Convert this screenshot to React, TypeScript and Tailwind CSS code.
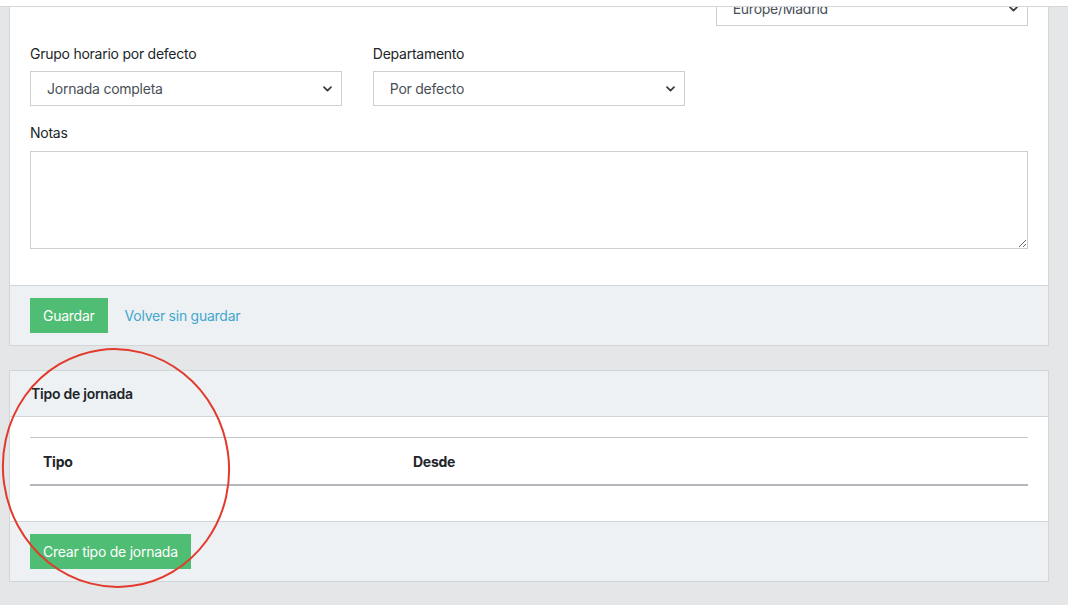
import React from "react";

function Chevron() {
  return (
    <svg width="9" height="6" viewBox="0 0 9 6" className="shrink-0">
      <path d="M1 1.2l3.5 3.4 3.5-3.4" fill="none" stroke="#343a40" strokeWidth="1.7" strokeLinecap="round" strokeLinejoin="round" />
    </svg>
  );
}

function FakeSelect({ value }: { value: string }) {
  return (
    <div className="h-[35px] border border-[#cdd0d3] bg-white flex items-center justify-between pl-4 pr-[9px] text-[14px] text-[#495057]">
      <span>{value}</span>
      <Chevron />
    </div>
  );
}

export default function App() {
  return (
    <div
      className="relative h-[605px] overflow-hidden bg-[#e4e6e8] text-[14px] leading-[21px] tracking-[-0.25px] text-[#212529]"
      style={{ fontFamily: "Inter, 'Noto Sans', sans-serif" }}
    >
      <div className="absolute top-0 left-0 right-0 h-[7px] bg-white border-b border-[#d5d8db] z-10" />

      <div className="pl-[9px] w-[1049px]">
        {/* Card 1 */}
        <div className="mt-[-30px] border border-[#d3d6d9] bg-white">
          <div className="px-5 pt-5 pb-[36px]">
            <div className="grid grid-cols-3 gap-x-[30.5px]">
              <div />
              <div />
              <FakeSelect value="Europe/Madrid" />
            </div>
            <div className="grid grid-cols-3 gap-x-[30.5px] mt-[17px]">
              <div>
                <div className="mb-[7px]">Grupo horario por defecto</div>
                <FakeSelect value="Jornada completa" />
              </div>
              <div>
                <div className="mb-[7px]">Departamento</div>
                <FakeSelect value="Por defecto" />
              </div>
              <div />
            </div>
            <div className="mt-[16px]">
              <div className="mb-[8px]">Notas</div>
              <textarea className="block w-full h-[98px] border border-[#cdd0d3] bg-white outline-none" />
            </div>
          </div>
          <div className="border-t border-[#d3d6d9] bg-[#edf1f4] px-5 py-3 flex items-center gap-[17px]">
            <button className="h-[35px] px-[13px] bg-[#4fbd74] text-white text-[14px]">Guardar</button>
            <span className="text-[#44a6cc]">Volver sin guardar</span>
          </div>
        </div>

        {/* Card 2 */}
        <div className="mt-6 border border-[#d3d6d9] bg-white">
          <div className="bg-[#edf1f4] border-b border-[#d3d6d9] h-[46px] flex items-center pl-[21px] font-semibold">
            Tipo de jornada
          </div>
          <div className="px-5 pt-5 pb-[35px]">
            <div className="border-t border-[#c4c7cb] border-b-2 border-b-[#b4b8bc] h-[49px] flex items-center font-bold">
              <div className="w-[371px] pl-[13px]">Tipo</div>
              <div className="pl-[12px]">Desde</div>
            </div>
          </div>
          <div className="border-t border-[#d3d6d9] bg-[#edf1f4] px-5 py-3 flex items-center">
            <button className="h-[35px] px-[13px] bg-[#4fbd74] text-white text-[14px]">Crear tipo de jornada</button>
          </div>
        </div>
      </div>

      <svg className="absolute left-0 top-0 pointer-events-none z-20" width="1068" height="605">
        <ellipse cx="116" cy="468" rx="113" ry="119" fill="none" stroke="#e23a2c" strokeWidth="2" transform="rotate(-8 116 468)" />
      </svg>
    </div>
  );
}
